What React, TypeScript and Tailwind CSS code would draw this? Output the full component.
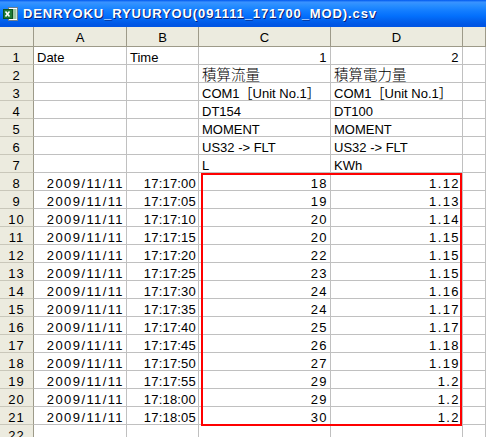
import type { ReactNode } from "react"

const font = "font-['Liberation_Sans','Noto_Sans_CJK_JP',sans-serif]"

const data: [string, string, string, string][] = [
  ["2009/11/11", "17:17:00", "18", "1.12"],
  ["2009/11/11", "17:17:05", "19", "1.13"],
  ["2009/11/11", "17:17:10", "20", "1.14"],
  ["2009/11/11", "17:17:15", "20", "1.15"],
  ["2009/11/11", "17:17:20", "22", "1.15"],
  ["2009/11/11", "17:17:25", "23", "1.15"],
  ["2009/11/11", "17:17:30", "24", "1.16"],
  ["2009/11/11", "17:17:35", "24", "1.17"],
  ["2009/11/11", "17:17:40", "25", "1.17"],
  ["2009/11/11", "17:17:45", "26", "1.18"],
  ["2009/11/11", "17:17:50", "27", "1.19"],
  ["2009/11/11", "17:17:55", "29", "1.2"],
  ["2009/11/11", "17:18:00", "29", "1.2"],
  ["2009/11/11", "17:18:05", "30", "1.2"],
]

const head: ReactNode[][] = [
  ["Date", "Time", "1", "2"],
  ["", "", <span className="text-[14.5px] font-light">積算流量</span>, <span className="text-[14.5px] font-light">積算電力量</span>],
  ["", "", "COM1［Unit No.1］", "COM1［Unit No.1］"],
  ["", "", "DT154", "DT100"],
  ["", "", "MOMENT", "MOMENT"],
  ["", "", "US32 -> FLT", "US32 -> FLT"],
  ["", "", "L", "KWh"],
]

function ExcelIcon() {
  return (
    <svg width="16" height="16" viewBox="0 0 16 16">
      <rect x="5.5" y="1.5" width="9" height="13" fill="#fff" stroke="#6f7f8f" />
      <path d="M10 4h3.5M10 6h3.5M10 8h3.5M10 10h3.5M10 12h3.5" stroke="#3f8f4f" strokeWidth="1" />
      <rect x="0.5" y="3.5" width="9" height="9" fill="#1f7a36" stroke="#0d5220" />
      <path d="M2.5 5.5l4 5M6.5 5.5l-4 5" stroke="#fff" strokeWidth="1.6" />
    </svg>
  )
}

function Cell({ children, right, track = "" }: { children?: ReactNode; right?: boolean; track?: string }) {
  return (
    <div
      className={`h-[18px] border-r border-b border-[#c0c0c0] flex items-end overflow-hidden whitespace-nowrap text-[13px] leading-[13px] text-black ${right ? "justify-end pl-[3px] pr-[2px]" : "px-[3px]"} ${track}`}
    >
      {children}
    </div>
  )
}

function RowHead({ n }: { n: number }) {
  return (
    <div className="h-[18px] border-r border-b border-r-[#9d9a89] border-b-[#c9c7ba] bg-[#ecebdf] flex items-end justify-center text-[13px] leading-[13px] tracking-[1px] text-black">
      {n}
    </div>
  )
}

export default function App() {
  const isNum = (v: ReactNode) => typeof v === "string" && /^[0-9]+$/.test(v)
  return (
    <div className={`w-[486px] h-[437px] overflow-hidden bg-white ${font}`}>
      <div className="h-[27px] flex items-center gap-[4px] pl-[3px] bg-[linear-gradient(to_bottom,#0058ee_0%,#3a93ff_8%,#288eff_20%,#127dff_40%,#036ffc_60%,#0262ee_75%,#0057e5_90%,#0054e3_100%)]">
        <ExcelIcon />
        <span className="text-white font-bold text-[13px] tracking-[0.9px] [text-shadow:1px_1px_0_#0a1f73]">
          DENRYOKU_RYUURYOU(091111_171700_MOD).csv
        </span>
      </div>

      <div className="relative">
        <div className="grid grid-cols-[34px_93px_72px_132px_132px_1fr]">
          {["", "A", "B", "C", "D", ""].map((c, i) => (
            <div
              key={i}
              className="h-[20px] bg-[#ecebdf] border-r border-b border-[#9d9a89] flex items-center justify-center pt-[2px] text-[13px] leading-[13px] text-black"
            >
              {c}
            </div>
          ))}

          {head.map((r, i) => (
            <div key={"h" + i} className="contents">
              <RowHead n={i + 1} />
              <Cell>{r[0]}</Cell>
              <Cell>{r[1]}</Cell>
              <Cell right={isNum(r[2])} track={isNum(r[2]) ? "tracking-[1.4px]" : ""}>{r[2]}</Cell>
              <Cell right={isNum(r[3])} track={isNum(r[3]) ? "tracking-[1.4px]" : ""}>{r[3]}</Cell>
              <Cell />
            </div>
          ))}

          {data.map((r, i) => (
            <div key={"d" + i} className="contents">
              <RowHead n={i + 8} />
              <Cell right track="tracking-[1.4px]">{r[0]}</Cell>
              <Cell right track="tracking-[0.2px]">{r[1]}</Cell>
              <Cell right track="tracking-[1.4px]">{r[2]}</Cell>
              <Cell right track="tracking-[1.4px]">{r[3]}</Cell>
              <Cell />
            </div>
          ))}

          <RowHead n={22} />
          <Cell />
          <Cell />
          <Cell />
          <Cell />
          <Cell />
        </div>

        <div className="absolute left-[201px] top-[146px] w-[261px] h-[253px] border-2 border-[#ff0000] pointer-events-none" />
      </div>
    </div>
  )
}
